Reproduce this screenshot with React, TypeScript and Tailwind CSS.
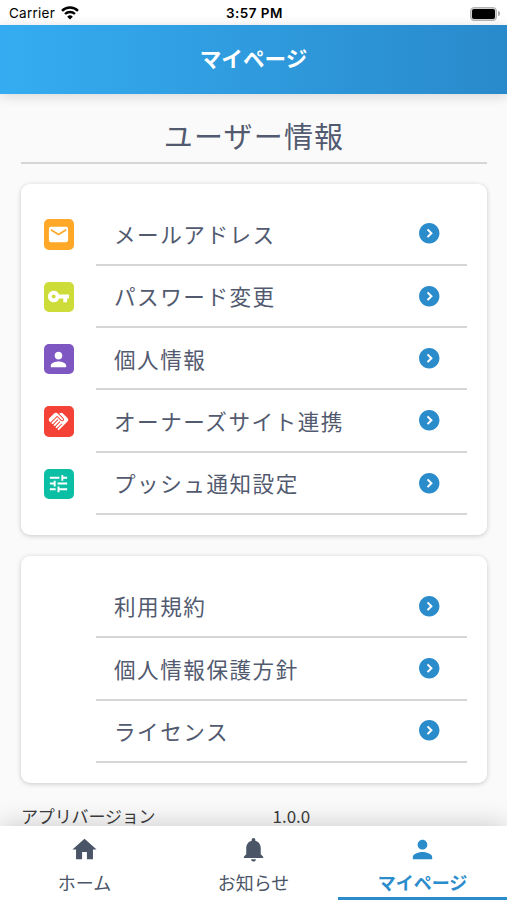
import clsx from 'clsx';
import type { IconType } from 'react-icons';
import {
  MdEmail,
  MdExpandCircleDown,
  MdHandshake,
  MdHome,
  MdNotifications,
  MdPerson,
  MdTune,
  MdVpnKey,
} from 'react-icons/md';

type MenuItem = {
  label: string;
  icon?: IconType;
  color?: string;
};

const userItems: MenuItem[] = [
  { label: 'メールアドレス', icon: MdEmail, color: 'bg-[#ffa726]' },
  { label: 'パスワード変更', icon: MdVpnKey, color: 'bg-[#cddc39]' },
  { label: '個人情報', icon: MdPerson, color: 'bg-[#7e57c2]' },
  { label: 'オーナーズサイト連携', icon: MdHandshake, color: 'bg-[#f44336]' },
  { label: 'プッシュ通知設定', icon: MdTune, color: 'bg-[#0bbfa5]' },
];

const legalItems: MenuItem[] = [
  { label: '利用規約' },
  { label: '個人情報保護方針' },
  { label: 'ライセンス' },
];

const tabs = [
  { label: 'ホーム', icon: MdHome },
  { label: 'お知らせ', icon: MdNotifications },
  { label: 'マイページ', icon: MdPerson, active: true },
];

function StatusBar() {
  return (
    <div className="grid h-[25px] shrink-0 grid-cols-3 items-center bg-white pt-0.5 pr-[7px] pl-[9px] font-['Inter','Liberation_Sans',sans-serif] text-[13.5px] text-black">
      <div className="flex items-center gap-1.5">
        <span className="tracking-[0.25px]">Carrier</span>
        <svg viewBox="0 0 18 14" className="-mt-0.5 h-3.5 w-[18px]" fill="none" stroke="currentColor">
          <path d="M1 4.8a11.6 11.6 0 0 1 16 0" strokeWidth="2.5" />
          <path d="M4 8a7.2 7.2 0 0 1 10 0" strokeWidth="2.3" />
          <path d="M9 13.6 6.2 10.7a4 4 0 0 1 5.6 0z" fill="currentColor" stroke="none" />
        </svg>
      </div>
      <span className="text-center font-semibold tracking-[0.45px] whitespace-nowrap">3:57 PM</span>
      <div className="flex items-center justify-end gap-px">
        <div className="h-[14px] w-[27px] rounded-[4px] border border-[#b4b4b4] bg-[#d0d0d0] p-px">
          <div className="h-full rounded-[2px] bg-black" />
        </div>
        <div className="h-[5px] w-[2px] rounded-r-full bg-[#a9a9a9]" />
      </div>
    </div>
  );
}

function MenuRow({ label, icon: Icon, color }: MenuItem) {
  return (
    <li className="flex h-[62.3px]">
      <div className="flex w-[75px] items-center pl-[22.5px]">
        {Icon && (
          <span className={clsx('flex size-[30.5px] items-center justify-center rounded-[5px] text-white', color)}>
            <Icon size={23} />
          </span>
        )}
      </div>
      <div className="mr-5 flex flex-1 items-center border-b-2 border-[#d6d6d6] pr-[26px] pl-[18px]">
        <span className="flex-1 pt-px text-[21.6px] tracking-[1.5px] whitespace-nowrap text-[#525a70]">
          {label}
        </span>
        <MdExpandCircleDown size={24.5} className="-rotate-90 text-[#2b8ccc]" />
      </div>
    </li>
  );
}

function MenuCard({ items }: { items: MenuItem[] }) {
  return (
    <ul className="rounded-[9px] bg-white pt-5 pb-5 shadow-[0_1px_5px_rgba(0,0,0,0.2)]">
      {items.map((item) => (
        <MenuRow key={item.label} {...item} />
      ))}
    </ul>
  );
}

export default function App() {
  return (
    <div className="flex h-screen flex-col overflow-hidden bg-[#fafafa] font-['Noto_Sans_CJK_JP',sans-serif]">
      <StatusBar />

      <header className="z-10 flex h-[68.5px] shrink-0 items-center justify-center bg-linear-to-r from-[#35acf1] to-[#298acb] pb-[3px] shadow-[0_2px_12px_rgba(0,0,0,0.15)]">
        <h1 className="text-[21.6px] font-bold text-white">マイページ</h1>
      </header>

      <main className="min-h-0 flex-1 overflow-hidden pt-[19px] pr-5 pl-[21px]">
        <h2 className="h-[51px] border-b-2 border-[#d6d6d6] text-center text-[29px] leading-[45px] tracking-[1.2px] text-[#525a70]">
          ユーザー情報
        </h2>

        <div className="mt-5 flex flex-col gap-[21px]">
          <MenuCard items={userItems} />
          <MenuCard items={legalItems} />
        </div>

        <div className="mt-[23px] grid grid-cols-[251.5px_1fr] text-[17px] leading-5 text-[#3c3c3c]">
          <span className="tracking-[-0.15px]">アプリバージョン</span>
          <span>1.0.0</span>
        </div>
      </main>

      <nav className="z-10 grid h-[74px] shrink-0 grid-cols-3 bg-white shadow-[0_-3px_24px_rgba(0,0,0,0.17)]">
        {tabs.map(({ label, icon: Icon, active }) => (
          <div
            key={label}
            className={clsx(
              'flex flex-col items-center border-b-[3px] pt-[9px]',
              active ? 'border-[#2b8ccc] font-bold text-[#2b8ccc]' : 'border-transparent text-[#4a5568]',
            )}
          >
            <Icon size={29} />
            <span className="mt-[5px] text-[18px] leading-[26px]">{label}</span>
          </div>
        ))}
      </nav>
    </div>
  );
}
